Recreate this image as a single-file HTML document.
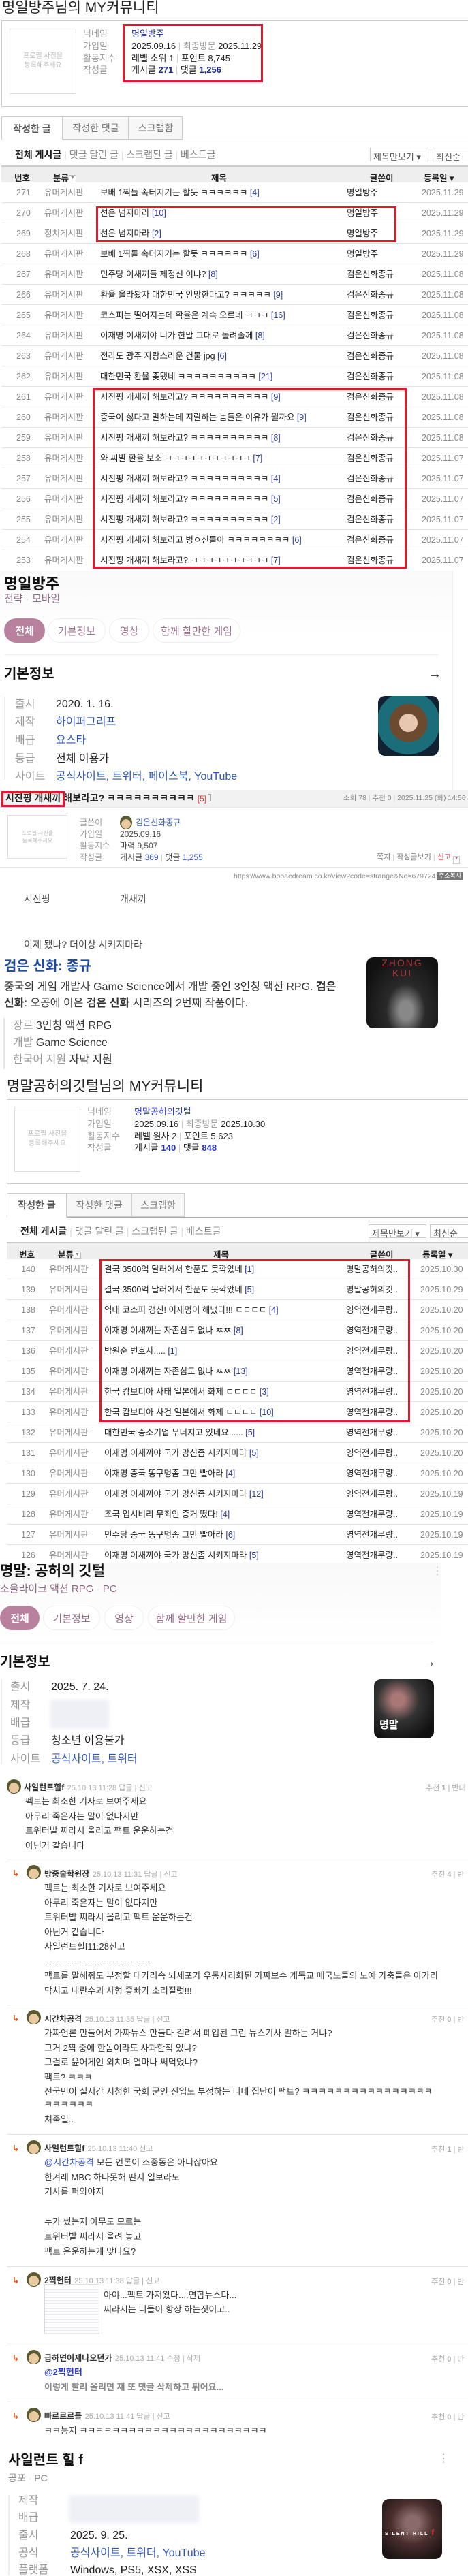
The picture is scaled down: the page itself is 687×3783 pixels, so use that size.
<!DOCTYPE html>
<html><head><meta charset="utf-8">
<style>
*{margin:0;padding:0;box-sizing:border-box}
body{width:687px;height:3782px;position:relative;background:#fff;font-family:"Liberation Sans","Noto Sans CJK KR",sans-serif;color:#222;overflow:hidden}
.a{position:absolute;white-space:nowrap;line-height:1}
.red{position:absolute;border:3px solid #e4182d}
.box{position:absolute;border:1px solid #ccc}
.photo{position:absolute;border:1px solid #ddd;color:#bbb;font-size:10px;text-align:center;display:flex;align-items:center;justify-content:center;line-height:1.4}
.lbl{color:#999;font-size:13px}
.val{font-size:13px;color:#222}
.nv{color:#1b2a8c;font-weight:bold}
.tab{position:absolute;border:1px solid #ccc;background:#f7f7f7;color:#777;font-size:14px;display:flex;align-items:center;justify-content:center}
.row{position:absolute;left:2px;width:685px;height:30px;border-bottom:1px solid #e3e3e3;font-size:12.5px}
.row span{position:absolute;top:9px;white-space:nowrap;line-height:1}
.g{color:#888}
.cm{color:#2b3a93}
.hdr{position:absolute;left:2px;width:685px;height:25px;background:#eee;border-top:2px solid #ccc;font-size:12.5px;font-weight:bold}
.hdr span{position:absolute;top:6px;white-space:nowrap}
.chip{position:absolute;height:36px;border:1px solid #eee;border-radius:18px;background:#fff;color:#9a6e8a;font-size:15px;display:flex;align-items:center;justify-content:center}
.chip.on{background:#b8829f;color:#fff;font-weight:bold;border-color:#b8829f}
.ik{color:#999;font-size:16px}
.iv{font-size:16px;color:#222}
.lk{color:#2f56b3}
.ch{font-size:13px;color:#333}
.cn{font-size:12px;font-weight:bold;color:#333}
.cd{font-size:11px;color:#aaa}
.av{position:absolute;width:21px;height:21px;border-radius:50%;background:radial-gradient(circle at 50% 60%,#e9c9a0 0 45%,#5a5a30 46%)}
.arr{position:absolute;color:#e05a20;font-size:12px;font-weight:bold}
.sep{position:absolute;left:10px;width:677px;height:1px;background:#e3e3e3}
.rc{position:absolute;left:625px;font-size:11px;color:#aaa;white-space:nowrap}
</style></head><body>

<!-- SECTION 1 -->
<div class="a" style="left:3px;top:1px;font-size:21px;color:#222">명일방주님의 MY커뮤니티</div>
<div class="box" style="left:2px;top:30px;width:700px;height:127px;border-color:#ccc"></div>
<div class="photo" style="left:14px;top:42px;width:98px;height:96px">프로필 사진을<br>등록해주세요</div>
<div class="a lbl" style="left:122px;top:43px">닉네임</div>
<div class="a lbl" style="left:122px;top:61px">가입일</div>
<div class="a lbl" style="left:122px;top:79px">활동지수</div>
<div class="a lbl" style="left:122px;top:96px">작성글</div>
<div class="a val" style="left:193px;top:43px;color:#1b2a8c">명일방주</div>
<div class="a val" style="left:193px;top:61px">2025.09.16 <span style="color:#ccc">|</span> <span style="color:#999">최종방문</span> 2025.11.29</div>
<div class="a val" style="left:193px;top:79px">레벨 소위 1 <span style="color:#ccc">|</span> 포인트 8,745</div>
<div class="a val" style="left:193px;top:96px">게시글 <span class="nv">271</span> <span style="color:#ccc">|</span> 댓글 <span class="nv">1,256</span></div>
<div class="red" style="left:180px;top:35px;width:206px;height:86px"></div>

<div style="position:absolute;left:2px;top:205px;width:685px;height:1px;background:#aaa"></div>
<div class="tab" style="left:2px;top:171px;width:90px;height:35px;background:#fff;border-bottom-color:#fff;color:#555;font-weight:bold">작성한 글</div>
<div class="tab" style="left:92px;top:171px;width:97px;height:34px">작성한 댓글</div>
<div class="tab" style="left:189px;top:171px;width:79px;height:34px">스크랩함</div>

<div class="a" style="left:22px;top:220px;font-size:14px;font-weight:bold">전체 게시글 <span style="color:#ddd;font-weight:normal">|</span> <span style="color:#888;font-weight:normal">댓글 달린 글 <span style="color:#ddd">|</span> 스크랩된 글 <span style="color:#ddd">|</span> 베스트글</span></div>
<div class="box" style="left:543px;top:217px;width:86px;height:20px;font-size:13px;color:#555;padding:2px 4px">제목만보기 ▾</div>
<div class="box" style="left:635px;top:217px;width:60px;height:20px;font-size:13px;color:#555;padding:2px 4px">최신순</div>

<div class="hdr" style="top:243px"><span style="left:19px">번호</span><span style="left:76px">분류 <span style="display:inline-block;width:11px;height:11px;border:1px solid #bbb;background:#fff;font-size:7px;vertical-align:middle;text-align:center;color:#888">▼</span></span><span style="left:308px">제목</span><span style="left:541px">글쓴이</span><span style="left:620px">등록일 ▾</span></div>

<div style="position:absolute;left:0;top:268px">
<div class="row" style="top:0"><span class="g" style="left:22px">271</span><span class="g" style="left:63px">유머게시판</span><span style="left:145px">보배 1찍들 속터지기는 할듯 ㅋㅋㅋㅋㅋㅋ <b class="cm" style="font-weight:normal">[4]</b></span><span style="left:507px">명일방주</span><span class="g" style="left:617px">2025.11.29</span></div>
<div class="row" style="top:30px"><span class="g" style="left:22px">270</span><span class="g" style="left:63px">유머게시판</span><span style="left:145px">선은 넘지마라 <b class="cm" style="font-weight:normal">[10]</b></span><span style="left:507px">명일방주</span><span class="g" style="left:617px">2025.11.29</span></div>
<div class="row" style="top:60px"><span class="g" style="left:22px">269</span><span class="g" style="left:63px">정치게시판</span><span style="left:145px">선은 넘지마라 <b class="cm" style="font-weight:normal">[2]</b></span><span style="left:507px">명일방주</span><span class="g" style="left:617px">2025.11.29</span></div>
<div class="row" style="top:90px"><span class="g" style="left:22px">268</span><span class="g" style="left:63px">유머게시판</span><span style="left:145px">보배 1찍들 속터지기는 할듯 ㅋㅋㅋㅋㅋㅋ <b class="cm" style="font-weight:normal">[6]</b></span><span style="left:507px">명일방주</span><span class="g" style="left:617px">2025.11.29</span></div>
<div class="row" style="top:120px"><span class="g" style="left:22px">267</span><span class="g" style="left:63px">유머게시판</span><span style="left:145px">민주당 이새끼들 제정신 이냐? <b class="cm" style="font-weight:normal">[8]</b></span><span style="left:507px">검은신화종규</span><span class="g" style="left:617px">2025.11.08</span></div>
<div class="row" style="top:150px"><span class="g" style="left:22px">266</span><span class="g" style="left:63px">유머게시판</span><span style="left:145px">환율 올라봤자 대한민국 안망한다고? ㅋㅋㅋㅋㅋ <b class="cm" style="font-weight:normal">[9]</b></span><span style="left:507px">검은신화종규</span><span class="g" style="left:617px">2025.11.08</span></div>
<div class="row" style="top:180px"><span class="g" style="left:22px">265</span><span class="g" style="left:63px">유머게시판</span><span style="left:145px">코스피는 떨어지는데 확율은 계속 오르네 ㅋㅋㅋ <b class="cm" style="font-weight:normal">[16]</b></span><span style="left:507px">검은신화종규</span><span class="g" style="left:617px">2025.11.08</span></div>
<div class="row" style="top:210px"><span class="g" style="left:22px">264</span><span class="g" style="left:63px">유머게시판</span><span style="left:145px">이재명 이새끼야 니가 한말 그대로 돌려줄께 <b class="cm" style="font-weight:normal">[8]</b></span><span style="left:507px">검은신화종규</span><span class="g" style="left:617px">2025.11.08</span></div>
<div class="row" style="top:240px"><span class="g" style="left:22px">263</span><span class="g" style="left:63px">유머게시판</span><span style="left:145px">전라도 광주 자랑스러운 건물 jpg <b class="cm" style="font-weight:normal">[6]</b></span><span style="left:507px">검은신화종규</span><span class="g" style="left:617px">2025.11.08</span></div>
<div class="row" style="top:270px"><span class="g" style="left:22px">262</span><span class="g" style="left:63px">유머게시판</span><span style="left:145px">대한민국 환율 좆됐네 ㅋㅋㅋㅋㅋㅋㅋㅋㅋㅋ <b class="cm" style="font-weight:normal">[21]</b></span><span style="left:507px">검은신화종규</span><span class="g" style="left:617px">2025.11.08</span></div>
<div class="row" style="top:300px"><span class="g" style="left:22px">261</span><span class="g" style="left:63px">유머게시판</span><span style="left:145px">시진핑 개새끼 해보라고? ㅋㅋㅋㅋㅋㅋㅋㅋㅋㅋ <b class="cm" style="font-weight:normal">[9]</b></span><span style="left:507px">검은신화종규</span><span class="g" style="left:617px">2025.11.08</span></div>
<div class="row" style="top:330px"><span class="g" style="left:22px">260</span><span class="g" style="left:63px">유머게시판</span><span style="left:145px">중국이 싫다고 말하는데 지랄하는 놈들은 이유가 뭘까요 <b class="cm" style="font-weight:normal">[9]</b></span><span style="left:507px">검은신화종규</span><span class="g" style="left:617px">2025.11.08</span></div>
<div class="row" style="top:360px"><span class="g" style="left:22px">259</span><span class="g" style="left:63px">유머게시판</span><span style="left:145px">시진핑 개새끼 해보라고? ㅋㅋㅋㅋㅋㅋㅋㅋㅋㅋ <b class="cm" style="font-weight:normal">[8]</b></span><span style="left:507px">검은신화종규</span><span class="g" style="left:617px">2025.11.08</span></div>
<div class="row" style="top:390px"><span class="g" style="left:22px">258</span><span class="g" style="left:63px">유머게시판</span><span style="left:145px">와 씨발 환율 보소 ㅋㅋㅋㅋㅋㅋㅋㅋㅋㅋㅋ <b class="cm" style="font-weight:normal">[7]</b></span><span style="left:507px">검은신화종규</span><span class="g" style="left:617px">2025.11.07</span></div>
<div class="row" style="top:420px"><span class="g" style="left:22px">257</span><span class="g" style="left:63px">유머게시판</span><span style="left:145px">시진핑 개새끼 해보라고? ㅋㅋㅋㅋㅋㅋㅋㅋㅋㅋ <b class="cm" style="font-weight:normal">[4]</b></span><span style="left:507px">검은신화종규</span><span class="g" style="left:617px">2025.11.07</span></div>
<div class="row" style="top:450px"><span class="g" style="left:22px">256</span><span class="g" style="left:63px">유머게시판</span><span style="left:145px">시진핑 개새끼 해보라고? ㅋㅋㅋㅋㅋㅋㅋㅋㅋㅋ <b class="cm" style="font-weight:normal">[5]</b></span><span style="left:507px">검은신화종규</span><span class="g" style="left:617px">2025.11.07</span></div>
<div class="row" style="top:480px"><span class="g" style="left:22px">255</span><span class="g" style="left:63px">유머게시판</span><span style="left:145px">시진핑 개새끼 해보라고? ㅋㅋㅋㅋㅋㅋㅋㅋㅋㅋ <b class="cm" style="font-weight:normal">[2]</b></span><span style="left:507px">검은신화종규</span><span class="g" style="left:617px">2025.11.07</span></div>
<div class="row" style="top:510px"><span class="g" style="left:22px">254</span><span class="g" style="left:63px">유머게시판</span><span style="left:145px">시진핑 개새끼 해보라고 병ㅇ신들아 ㅋㅋㅋㅋㅋㅋㅋㅋ <b class="cm" style="font-weight:normal">[6]</b></span><span style="left:507px">검은신화종규</span><span class="g" style="left:617px">2025.11.07</span></div>
<div class="row" style="top:540px;border-bottom:none"><span class="g" style="left:22px">253</span><span class="g" style="left:63px">유머게시판</span><span style="left:145px">시진핑 개새끼 해보라고? ㅋㅋㅋㅋㅋㅋㅋㅋㅋㅋ <b class="cm" style="font-weight:normal">[7]</b></span><span style="left:507px">검은신화종규</span><span class="g" style="left:617px">2025.11.07</span></div>
</div>
<div class="red" style="left:141px;top:303px;width:441px;height:53px"></div>
<div class="red" style="left:136px;top:570px;width:461px;height:265px"></div>

<!-- GAME CARD 1 -->
<div style="position:absolute;left:0;top:838px;width:665px;height:325px;background:linear-gradient(#faf9fa,#fff 30%);border-right:1px solid #eee"></div>
<div class="a" style="left:6px;top:847px;font-size:22px;font-weight:bold;color:#111">명일방주</div>
<div class="a" style="left:6px;top:872px;font-size:15px;color:#8d6a82">전략 <span style="color:#ddd">·</span> 모바일</div>
<div class="chip on" style="left:6px;top:908px;width:60px">전체</div>
<div class="chip" style="left:70px;top:908px;width:85px">기본정보</div>
<div class="chip" style="left:160px;top:908px;width:59px">영상</div>
<div class="chip" style="left:224px;top:908px;width:129px">함께 할만한 게임</div>
<div style="position:absolute;left:6px;top:961px;width:638px;height:1px;background:#eee"></div>
<div class="a" style="left:6px;top:980px;font-size:20px;font-weight:bold;color:#111">기본정보</div>
<div class="a" style="left:628px;top:980px;font-size:20px;color:#333">→</div>
<div style="position:absolute;left:6px;top:1023px;width:2px;height:122px;background:#eee"></div>
<div class="a ik" style="left:22px;top:1027px">출시</div><div class="a iv" style="left:82px;top:1027px">2020. 1. 16.</div>
<div class="a ik" style="left:22px;top:1053px">제작</div><div class="a iv lk" style="left:82px;top:1053px">하이퍼그리프</div>
<div class="a ik" style="left:22px;top:1080px">배급</div><div class="a iv lk" style="left:82px;top:1080px">요스타</div>
<div class="a ik" style="left:22px;top:1107px">등급</div><div class="a iv" style="left:82px;top:1107px">전체 이용가</div>
<div class="a ik" style="left:22px;top:1133px">사이트</div><div class="a iv lk" style="left:82px;top:1133px">공식사이트, 트위터, 페이스북, YouTube</div>
<div style="position:absolute;left:555px;top:1022px;width:89px;height:88px;border-radius:10px;background:radial-gradient(circle at 50% 45%,#e8c7b0 0 20%,#6b4a30 21% 42%,#1b6d7a 43% 70%,#123 71%)"></div>

<!-- POST -->
<div style="position:absolute;left:0;top:1160px;width:687px;height:26px;background:#f2f2f2;border-bottom:1px solid #e5e5e5"></div>
<div class="a" style="left:8px;top:1165px;font-size:14px;font-weight:bold;color:#222">시진핑 개새끼 해보라고? ㅋㅋㅋㅋㅋㅋㅋㅋㅋㅋ <span style="color:#d33;font-weight:normal;font-size:12px">[5]</span><span style="display:inline-block;width:5px;height:11px;border:1px solid #aaa;border-radius:1px;margin-left:2px"></span></div>
<div class="red" style="left:2px;top:1162px;width:93px;height:23px"></div>
<div class="a" style="left:504px;top:1167px;font-size:10.5px;color:#888">조회 78 <span style="color:#ccc">|</span> 추천 0 <span style="color:#ccc">|</span> 2025.11.25 (화) 14:56</div>
<div class="photo" style="left:11px;top:1197px;width:88px;height:64px;font-size:8px">프로필 사진을<br>등록해주세요</div>
<div class="a lbl" style="left:117px;top:1202px;font-size:12px">글쓴이</div>
<div class="a lbl" style="left:117px;top:1219px;font-size:12px">가입일</div>
<div class="a lbl" style="left:117px;top:1236px;font-size:12px">활동지수</div>
<div class="a lbl" style="left:117px;top:1253px;font-size:12px">작성글</div>
<div class="av" style="left:176px;top:1198px;width:18px;height:20px"></div>
<div class="a" style="left:199px;top:1202px;font-size:12px;color:#3a5fb3">검은신화종규</div>
<div class="a" style="left:176px;top:1219px;font-size:12px;color:#444">2025.09.16</div>
<div class="a" style="left:176px;top:1236px;font-size:12px;color:#444">마력 9,507</div>
<div class="a" style="left:176px;top:1253px;font-size:12px;color:#444">게시글 <span style="color:#3a5fcd">369</span> <span style="color:#ccc">|</span> 댓글 <span style="color:#3a5fcd">1,255</span></div>
<div class="a" style="left:553px;top:1254px;font-size:11px;color:#777">쪽지 <span style="color:#ccc">|</span> 작성글보기 <span style="color:#ccc">|</span> <span style="color:#e55">신고</span> <span style="display:inline-block;width:10px;height:12px;border:1px solid #ccc;font-size:6px;text-align:center">▼</span></div>
<div style="position:absolute;left:0;top:1273px;width:687px;height:2px;background:#e8e8e8"></div>
<div class="a" style="left:343px;top:1282px;font-size:10.5px;color:#888">https://www.bobaedream.co.kr/view?code=strange&amp;No=6797241</div>
<div class="a" style="left:641px;top:1280px;font-size:9px;color:#fff;background:#777;padding:2px 3px">주소복사</div>
<div class="a" style="left:35px;top:1313px;font-size:14px;color:#444">시진핑</div>
<div class="a" style="left:176px;top:1313px;font-size:14px;color:#444">개새끼</div>
<div class="a" style="left:35px;top:1380px;font-size:14px;color:#444">이제 됐나? 더이상 시키지마라</div>

<!-- namu card -->
<div class="a" style="left:6px;top:1409px;font-size:20px;font-weight:bold;color:#1e4aa0">검은 신화: 종규</div>
<div class="a" style="left:6px;top:1442px;font-size:16px;color:#333">중국의 게임 개발사 Game Science에서 개발 중인 3인칭 액션 RPG. <b>검은</b></div>
<div class="a" style="left:6px;top:1466px;font-size:16px;color:#333"><b>신화</b>: 오공에 이은 <b>검은 신화</b> 시리즈의 2번째 작품이다.</div>
<div style="position:absolute;left:538px;top:1406px;width:105px;height:104px;border-radius:10px;background:radial-gradient(ellipse at 55% 75%,#888 0 12%,#2a2a2a 35%,#111 80%)"><div style="color:#a33;font-size:14px;text-align:center;letter-spacing:2px;margin-top:1px;line-height:15px">ZHONG<br>KUI</div></div>
<div style="position:absolute;left:5px;top:1495px;width:2px;height:75px;background:#e5e5e5"></div>
<div class="a" style="left:19px;top:1499px;font-size:16px;color:#999">장르 <span style="color:#333">3인칭 액션 RPG</span></div>
<div class="a" style="left:19px;top:1524px;font-size:16px;color:#999">개발 <span style="color:#333">Game Science</span></div>
<div class="a" style="left:19px;top:1549px;font-size:16px;color:#999">한국어 지원 <span style="color:#333">자막 지원</span></div>

<!-- SECTION 2 -->
<div class="a" style="left:10px;top:1585px;font-size:21px;color:#222">명말공허의깃털님의 MY커뮤니티</div>
<div class="box" style="left:10px;top:1614px;width:700px;height:125px"></div>
<div class="photo" style="left:21px;top:1625px;width:97px;height:96px">프로필 사진을<br>등록해주세요</div>
<div class="a lbl" style="left:128px;top:1626px">닉네임</div>
<div class="a lbl" style="left:128px;top:1644px">가입일</div>
<div class="a lbl" style="left:128px;top:1662px">활동지수</div>
<div class="a lbl" style="left:128px;top:1679px">작성글</div>
<div class="a val" style="left:197px;top:1626px;color:#2b3ac8">명말공허의깃털</div>
<div class="a val" style="left:197px;top:1644px">2025.09.16 <span style="color:#ccc">|</span> <span style="color:#999">최종방문</span> 2025.10.30</div>
<div class="a val" style="left:197px;top:1662px">레벨 원사 2 <span style="color:#ccc">|</span> 포인트 5,623</div>
<div class="a val" style="left:197px;top:1679px">게시글 <span class="nv" style="color:#2233c0">140</span> <span style="color:#ccc">|</span> 댓글 <span class="nv" style="color:#2233c0">848</span></div>

<div style="position:absolute;left:10px;top:1787px;width:677px;height:1px;background:#aaa"></div>
<div class="tab" style="left:10px;top:1752px;width:88px;height:36px;background:#fff;border-bottom-color:#fff;color:#555;font-weight:bold">작성한 글</div>
<div class="tab" style="left:98px;top:1752px;width:95px;height:35px">작성한 댓글</div>
<div class="tab" style="left:193px;top:1752px;width:78px;height:35px">스크랩함</div>
<div class="a" style="left:30px;top:1801px;font-size:14px;font-weight:bold">전체 게시글 <span style="color:#ddd;font-weight:normal">|</span> <span style="color:#888;font-weight:normal">댓글 달린 글 <span style="color:#ddd">|</span> 스크랩된 글 <span style="color:#ddd">|</span> 베스트글</span></div>
<div class="box" style="left:541px;top:1798px;width:85px;height:20px;font-size:13px;color:#555;padding:2px 4px">제목만보기 ▾</div>
<div class="box" style="left:631px;top:1798px;width:60px;height:20px;font-size:13px;color:#555;padding:2px 4px">최신순</div>
<div class="hdr" style="top:1824px;left:10px;width:677px"><span style="left:18px">번호</span><span style="left:75px">분류 <span style="display:inline-block;width:11px;height:11px;border:1px solid #bbb;background:#fff;font-size:7px;vertical-align:middle;text-align:center;color:#888">▼</span></span><span style="left:303px">제목</span><span style="left:533px">글쓴이</span><span style="left:610px">등록일 ▾</span></div>

<div style="position:absolute;left:8px;top:1849px">
<div class="row" style="top:0"><span class="g" style="left:21px">140</span><span class="g" style="left:62px">유머게시판</span><span style="left:143px">결국 3500억 달러에서 한푼도 못깍았네 <b class="cm" style="font-weight:normal">[1]</b></span><span style="left:498px">명말공허의깃..</span><span class="g" style="left:607px">2025.10.30</span></div>
<div class="row" style="top:30px"><span class="g" style="left:21px">139</span><span class="g" style="left:62px">유머게시판</span><span style="left:143px">결국 3500억 달러에서 한푼도 못깍았네 <b class="cm" style="font-weight:normal">[5]</b></span><span style="left:498px">명말공허의깃..</span><span class="g" style="left:607px">2025.10.29</span></div>
<div class="row" style="top:60px"><span class="g" style="left:21px">138</span><span class="g" style="left:62px">유머게시판</span><span style="left:143px">역대 코스피 갱신! 이재명이 해냈다!!! ㄷㄷㄷㄷ <b class="cm" style="font-weight:normal">[4]</b></span><span style="left:498px">영역전개무량..</span><span class="g" style="left:607px">2025.10.20</span></div>
<div class="row" style="top:90px"><span class="g" style="left:21px">137</span><span class="g" style="left:62px">유머게시판</span><span style="left:143px">이재명 이새끼는 자존심도 없나 ㅉㅉ <b class="cm" style="font-weight:normal">[8]</b></span><span style="left:498px">영역전개무량..</span><span class="g" style="left:607px">2025.10.20</span></div>
<div class="row" style="top:120px"><span class="g" style="left:21px">136</span><span class="g" style="left:62px">유머게시판</span><span style="left:143px">박원순 변호사..... <b class="cm" style="font-weight:normal">[1]</b></span><span style="left:498px">영역전개무량..</span><span class="g" style="left:607px">2025.10.20</span></div>
<div class="row" style="top:150px"><span class="g" style="left:21px">135</span><span class="g" style="left:62px">유머게시판</span><span style="left:143px">이재명 이새끼는 자존심도 없나 ㅉㅉ <b class="cm" style="font-weight:normal">[13]</b></span><span style="left:498px">영역전개무량..</span><span class="g" style="left:607px">2025.10.20</span></div>
<div class="row" style="top:180px"><span class="g" style="left:21px">134</span><span class="g" style="left:62px">유머게시판</span><span style="left:143px">한국 캄보디아 사태 일본에서 화제 ㄷㄷㄷㄷ <b class="cm" style="font-weight:normal">[3]</b></span><span style="left:498px">영역전개무량..</span><span class="g" style="left:607px">2025.10.20</span></div>
<div class="row" style="top:210px"><span class="g" style="left:21px">133</span><span class="g" style="left:62px">유머게시판</span><span style="left:143px">한국 캄보디아 사건 일본에서 화제 ㄷㄷㄷㄷ <b class="cm" style="font-weight:normal">[10]</b></span><span style="left:498px">영역전개무량..</span><span class="g" style="left:607px">2025.10.20</span></div>
<div class="row" style="top:240px"><span class="g" style="left:21px">132</span><span class="g" style="left:62px">유머게시판</span><span style="left:143px">대한민국 중소기업 무너지고 있네요...... <b class="cm" style="font-weight:normal">[5]</b></span><span style="left:498px">영역전개무량..</span><span class="g" style="left:607px">2025.10.20</span></div>
<div class="row" style="top:270px"><span class="g" style="left:21px">131</span><span class="g" style="left:62px">유머게시판</span><span style="left:143px">이재명 이새끼야 국가 망신좀 시키지마라 <b class="cm" style="font-weight:normal">[5]</b></span><span style="left:498px">영역전개무량..</span><span class="g" style="left:607px">2025.10.20</span></div>
<div class="row" style="top:300px"><span class="g" style="left:21px">130</span><span class="g" style="left:62px">유머게시판</span><span style="left:143px">이재명 중국 똥구멍좀 그만 빨아라 <b class="cm" style="font-weight:normal">[4]</b></span><span style="left:498px">영역전개무량..</span><span class="g" style="left:607px">2025.10.20</span></div>
<div class="row" style="top:330px"><span class="g" style="left:21px">129</span><span class="g" style="left:62px">유머게시판</span><span style="left:143px">이재명 이새끼야 국가 망신좀 시키지마라 <b class="cm" style="font-weight:normal">[12]</b></span><span style="left:498px">영역전개무량..</span><span class="g" style="left:607px">2025.10.19</span></div>
<div class="row" style="top:360px"><span class="g" style="left:21px">128</span><span class="g" style="left:62px">유머게시판</span><span style="left:143px">조국 입시비리 무죄인 증거 떴다! <b class="cm" style="font-weight:normal">[4]</b></span><span style="left:498px">영역전개무량..</span><span class="g" style="left:607px">2025.10.19</span></div>
<div class="row" style="top:390px"><span class="g" style="left:21px">127</span><span class="g" style="left:62px">유머게시판</span><span style="left:143px">민주당 중국 똥구멍좀 그만 빨아라 <b class="cm" style="font-weight:normal">[6]</b></span><span style="left:498px">영역전개무량..</span><span class="g" style="left:607px">2025.10.19</span></div>
<div class="row" style="top:420px;border-bottom:none"><span class="g" style="left:21px">126</span><span class="g" style="left:62px">유머게시판</span><span style="left:143px">이재명 이새끼야 국가 망신좀 시키지마라 <b class="cm" style="font-weight:normal">[5]</b></span><span style="left:498px">영역전개무량..</span><span class="g" style="left:607px">2025.10.19</span></div>
</div>
<div class="red" style="left:146px;top:1849px;width:456px;height:240px"></div>

<!-- GAME CARD 2 -->
<div style="position:absolute;left:0;top:2295px;width:648px;height:115px;background:linear-gradient(#faf9fa,#fff)"></div>
<div class="a" style="left:0;top:2297px;font-size:21px;font-weight:bold;color:#111">명말: 공허의 깃털</div>
<div class="a" style="left:0;top:2326px;font-size:15px;color:#8d6a82">소울라이크 액션 RPG <span style="color:#ddd">·</span> PC</div>
<div class="a" style="left:634px;top:2300px;font-size:16px;color:#ccc">⋮</div>
<div class="chip on" style="left:0;top:2358px;width:58px">전체</div>
<div class="chip" style="left:63px;top:2358px;width:84px">기본정보</div>
<div class="chip" style="left:153px;top:2358px;width:58px">영상</div>
<div class="chip" style="left:217px;top:2358px;width:128px">함께 할만한 게임</div>
<div style="position:absolute;left:0;top:2411px;width:637px;height:1px;background:#eee"></div>
<div class="a" style="left:0;top:2431px;font-size:20px;font-weight:bold;color:#111">기본정보</div>
<div class="a" style="left:620px;top:2431px;font-size:20px;color:#333">→</div>
<div style="position:absolute;left:1px;top:2466px;width:2px;height:125px;background:#eee"></div>
<div class="a ik" style="left:15px;top:2470px">출시</div><div class="a iv" style="left:75px;top:2470px">2025. 7. 24.</div>
<div class="a ik" style="left:15px;top:2497px">제작</div>
<div class="a ik" style="left:15px;top:2523px">배급</div>
<div style="position:absolute;left:74px;top:2496px;width:86px;height:42px;background:#eef0f6;filter:blur(3px)"></div>
<div class="a ik" style="left:15px;top:2549px">등급</div><div class="a iv" style="left:75px;top:2549px">청소년 이용불가</div>
<div class="a ik" style="left:15px;top:2576px">사이트</div><div class="a iv lk" style="left:75px;top:2576px">공식사이트, 트위터</div>
<div style="position:absolute;left:549px;top:2466px;width:88px;height:87px;border-radius:10px;background:radial-gradient(circle at 40% 35%,#a77 0 12%,#333 40%,#111 80%)"><div style="color:#fff;font-size:15px;font-weight:bold;margin:56px 0 0 8px">명말</div></div>

<!-- COMMENTS -->
<div class="av" style="left:10px;top:2613px"></div>
<div class="a" style="left:35px;top:2617px"><span class="cn">사일런트힐f</span> <span class="cd">25.10.13 11:28 답글 | 신고</span></div>
<div class="rc" style="top:2617px">추천 <b>1</b> | 반대</div>
<div class="a ch" style="left:37px;top:2639px">펙트는 최소한 기사로 보여주세요</div>
<div class="a ch" style="left:37px;top:2661px">아무리 죽은자는 말이 없다지만</div>
<div class="a ch" style="left:37px;top:2682px">트위터발 찌라시 올리고 팩트 운운하는건</div>
<div class="a ch" style="left:37px;top:2704px">아닌거 같습니다</div>
<div class="sep" style="top:2731px"></div>

<div class="arr" style="left:18px;top:2744px">↳</div>
<div class="av" style="left:39px;top:2739px"></div>
<div class="a" style="left:65px;top:2744px"><span class="cn">방중술학원장</span> <span class="cd">25.10.13 11:31 답글 | 신고</span></div>
<div class="rc" style="top:2744px;left:633px">추천 <b>4</b> | 반</div>
<div class="a ch" style="left:65px;top:2766px">펙트는 최소한 기사로 보여주세요</div>
<div class="a ch" style="left:65px;top:2788px">아무리 죽은자는 말이 없다지만</div>
<div class="a ch" style="left:65px;top:2809px">트위터발 찌라시 올리고 팩트 운운하는건</div>
<div class="a ch" style="left:65px;top:2831px">아닌거 같습니다</div>
<div class="a ch" style="left:65px;top:2852px">사일런트힐f11:28신고</div>
<div class="a ch" style="left:65px;top:2874px">------------------------------------</div>
<div class="a ch" style="left:65px;top:2895px">팩트를 말해줘도 부정할 대가리속 뇌세포가 우동사리화된 가짜보수 개독교 매국노들의 노예 가축들은 아가리</div>
<div class="a ch" style="left:65px;top:2917px">닥치고 내란수괴 사형 좋빠가 소리질럿!!!</div>
<div class="sep" style="top:2944px"></div>

<div class="arr" style="left:18px;top:2957px">↳</div>
<div class="av" style="left:39px;top:2952px"></div>
<div class="a" style="left:65px;top:2957px"><span class="cn">시간차공격</span> <span class="cd">25.10.13 11:35 답글 | 신고</span></div>
<div class="rc" style="top:2957px;left:633px">추천 <b>0</b> | 반</div>
<div class="a ch" style="left:65px;top:2979px">가짜언론 만들어서 가짜뉴스 만들다 걸려서 폐업된 그런 뉴스기사 말하는 거냐?</div>
<div class="a ch" style="left:65px;top:3001px">그거 2찍 중에 한놈이라도 사과한적 있냐?</div>
<div class="a ch" style="left:65px;top:3022px">그걸로 윤어게인 외치며 얼마나 써먹었냐?</div>
<div class="a ch" style="left:65px;top:3044px">팩트? ㅋㅋㅋ</div>
<div class="a ch" style="left:65px;top:3065px">전국민이 실시간 시청한 국회 군인 진입도 부정하는 니네 집단이 팩트? ㅋㅋㅋㅋㅋㅋㅋㅋㅋㅋㅋㅋㅋㅋㅋㅋ</div>
<div class="a ch" style="left:65px;top:3084px">ㅋㅋㅋㅋㅋㅋ</div>
<div class="a ch" style="left:65px;top:3106px">쳐죽일..</div>
<div class="sep" style="top:3134px"></div>

<div class="arr" style="left:18px;top:3148px">↳</div>
<div class="av" style="left:39px;top:3143px"></div>
<div class="a" style="left:65px;top:3147px"><span class="cn">사일런트힐f</span> <span class="cd">25.10.13 11:40 신고</span></div>
<div class="rc" style="top:3148px;left:633px">추천 <b>1</b> | 반</div>
<div class="a ch" style="left:65px;top:3169px"><span style="color:#2d4fd0">@시간차공격</span> 모든 언론이 조중동은 아니잖아요</div>
<div class="a ch" style="left:65px;top:3191px">한겨레 MBC 하다못해 딴지 일보라도</div>
<div class="a ch" style="left:65px;top:3212px">기사를 퍼와야지</div>
<div class="a ch" style="left:65px;top:3256px">누가 썼는지 아무도 모르는</div>
<div class="a ch" style="left:65px;top:3278px">트위터발 찌라시 올려 놓고</div>
<div class="a ch" style="left:65px;top:3300px">팩트 운운하는게 맞나요?</div>
<div class="sep" style="top:3328px"></div>

<div class="arr" style="left:18px;top:3342px">↳</div>
<div class="av" style="left:39px;top:3337px"></div>
<div class="a" style="left:65px;top:3341px"><span class="cn">2찍헌터</span> <span class="cd">25.10.13 11:38 답글 | 신고</span></div>
<div class="rc" style="top:3342px;left:633px">추천 <b>0</b> | 반</div>
<div style="position:absolute;left:65px;top:3354px;width:81px;height:74px;border:1px solid #ddd;background:repeating-linear-gradient(#fff 0 3px,#e6e8ee 3px 4px)"></div>
<div class="a ch" style="left:152px;top:3364px">아야...팩트 가져왔다....연합뉴스다...</div>
<div class="a ch" style="left:152px;top:3385px">찌라시는 니들이 항상 하는짓이고..</div>
<div class="sep" style="top:3442px"></div>

<div class="arr" style="left:18px;top:3456px">↳</div>
<div class="av" style="left:39px;top:3451px"></div>
<div class="a" style="left:65px;top:3455px"><span class="cn">급하면어제나오던가</span> <span class="cd">25.10.13 11:41 수정 | 삭제</span></div>
<div class="rc" style="top:3456px;left:633px">추천 <b>0</b> | 반</div>
<div class="a" style="left:65px;top:3477px;font-size:13px;font-weight:bold;color:#2d3fd0">@2찍헌터</div>
<div class="a" style="left:65px;top:3499px;font-size:13px;font-weight:bold;color:#888">이렇게 빨리 올리면 쟤 또 댓글 삭제하고 튀어요...</div>
<div class="sep" style="top:3527px"></div>

<div class="arr" style="left:18px;top:3541px">↳</div>
<div class="av" style="left:39px;top:3536px"></div>
<div class="a" style="left:65px;top:3540px"><span class="cn">빠르르르를</span> <span class="cd">25.10.13 11:41 답글 | 신고</span></div>
<div class="rc" style="top:3541px;left:633px">추천 <b>0</b> | 반</div>
<div class="a ch" style="left:65px;top:3563px">ㅋㅋ능지 ㅋㅋㅋㅋㅋㅋㅋㅋㅋㅋㅋㅋㅋㅋㅋㅋㅋㅋㅋㅋㅋㅋㅋ</div>

<!-- GAME CARD 3 -->
<div class="a" style="left:12px;top:3603px;font-size:20px;font-weight:bold;color:#111">사일런트 힐 f</div>
<div class="a" style="left:12px;top:3632px;font-size:14px;color:#888">공포 <span style="color:#ccc">·</span> PC</div>
<div class="a" style="left:643px;top:3603px;font-size:16px;color:#999">⋮</div>
<div style="position:absolute;left:12px;top:3664px;width:2px;height:118px;background:#eee"></div>
<div class="a ik" style="left:27px;top:3665px">제작</div>
<div class="a ik" style="left:27px;top:3690px">배급</div>
<div style="position:absolute;left:101px;top:3665px;width:191px;height:40px;background:#eef0f6;filter:blur(3px)"></div>
<div class="a ik" style="left:27px;top:3716px">출시</div><div class="a iv" style="left:103px;top:3716px">2025. 9. 25.</div>
<div class="a ik" style="left:27px;top:3742px">공식</div><div class="a iv lk" style="left:103px;top:3742px">공식사이트, 트위터, YouTube</div>
<div class="a ik" style="left:27px;top:3767px">플랫폼</div><div class="a iv" style="left:103px;top:3767px">Windows, PS5, XSX, XSS</div>
<div style="position:absolute;left:561px;top:3670px;width:88px;height:88px;border-radius:10px;background:radial-gradient(circle at 50% 40%,#8a6a6a 0 15%,#4a2e2e 45%,#1d1414 85%)"><div style="color:#fff;font-size:7px;font-weight:bold;letter-spacing:2px;margin:42px 0 0 4px">SILENT HILL <span style="color:#c33;font-size:12px">f</span></div></div>

</body></html>
